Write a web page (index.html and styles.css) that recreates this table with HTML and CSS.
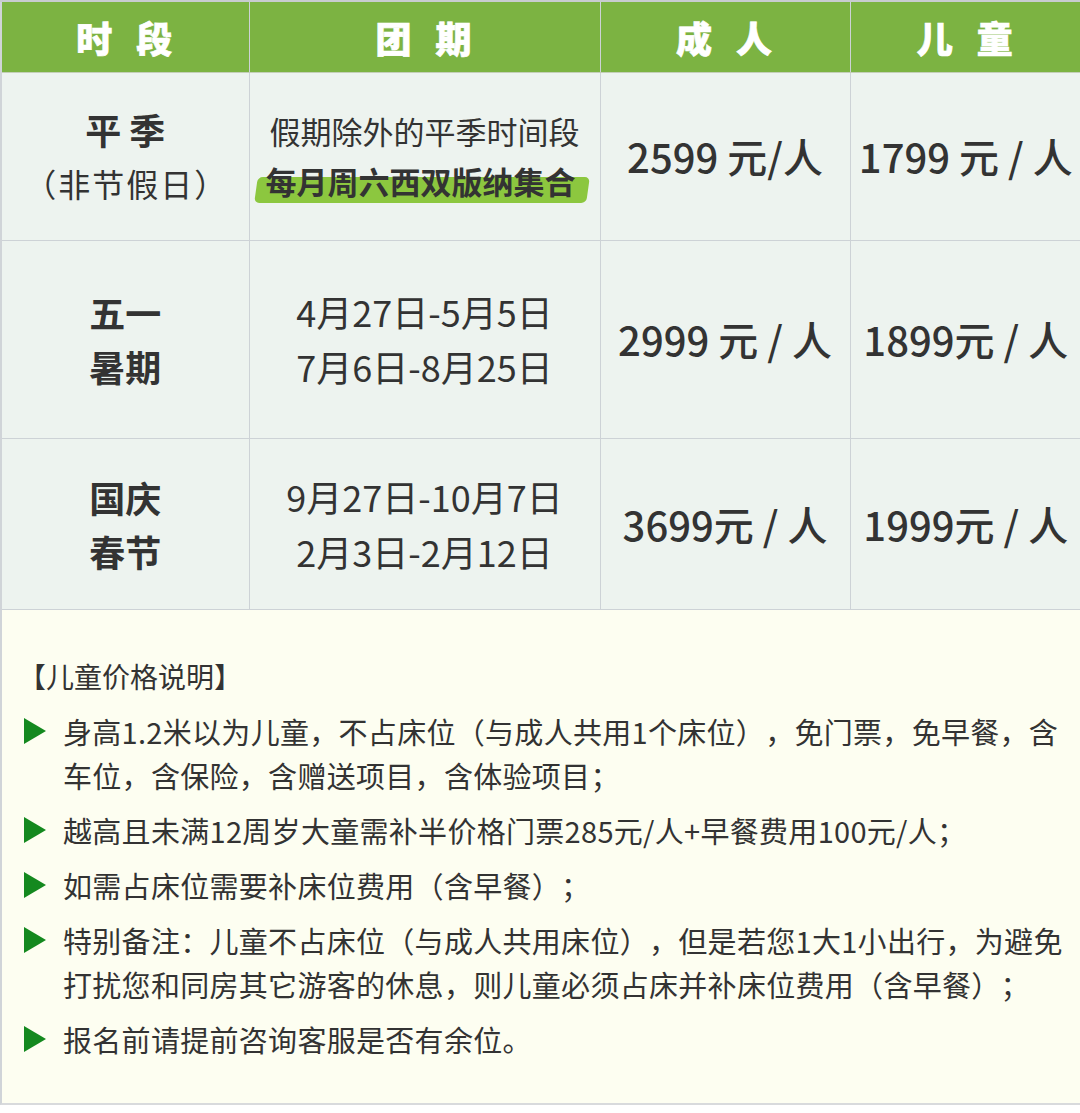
FILE: index.html
```html
<!DOCTYPE html>
<html lang="zh-CN">
<head>
<meta charset="utf-8">
<title>价格表</title>
<link rel="stylesheet" href="styles.css">
</head>
<body>
<div class="page">
  <table class="grid">
    <colgroup>
      <col class="c1"><col class="c2"><col class="c3"><col class="c4">
    </colgroup>
    <thead>
      <tr class="head">
        <th>时 段</th><th>团 期</th><th>成 人</th><th>儿 童</th>
      </tr>
    </thead>
    <tbody>
      <tr class="r1">
        <td class="season"><div class="strong">平 季</div><div class="sub">（非节假日）</div></td>
        <td class="period"><div class="note">假期除外的平季时间段</div><div class="mark"><span class="hl">每月周六西双版纳集合</span></div></td>
        <td class="price">2599 元/人</td>
        <td class="price">1799 元 / 人</td>
      </tr>
      <tr class="r2">
        <td class="season"><div class="strong">五一</div><div class="strong">暑期</div></td>
        <td class="period"><div class="date">4月27日-5月5日</div><div class="date">7月6日-8月25日</div></td>
        <td class="price">2999 元 / 人</td>
        <td class="price">1899元 / 人</td>
      </tr>
      <tr class="r3">
        <td class="season"><div class="strong">国庆</div><div class="strong">春节</div></td>
        <td class="period"><div class="date">9月27日-10月7日</div><div class="date">2月3日-2月12日</div></td>
        <td class="price">3699元 / 人</td>
        <td class="price">1999元 / 人</td>
      </tr>
    </tbody>
  </table>
  <section class="info">
    <h2 class="info-title">【儿童价格说明】</h2>
    <ul class="rules">
      <li><span class="tri"></span><p>身高1.2米以为儿童，不占床位（与成人共用1个床位），免门票，免早餐，含车位，含保险，含赠送项目，含体验项目；</p></li>
      <li><span class="tri"></span><p>越高且未满12周岁大童需补半价格门票285元/人+早餐费用100元/人；</p></li>
      <li><span class="tri"></span><p>如需占床位需要补床位费用（含早餐）；</p></li>
      <li><span class="tri"></span><p>特别备注：儿童不占床位（与成人共用床位），但是若您1大1小出行，为避免打扰您和同房其它游客的休息，则儿童必须占床并补床位费用（含早餐）；</p></li>
      <li><span class="tri"></span><p>报名前请提前咨询客服是否有余位。</p></li>
    </ul>
  </section>
</div>
</body>
</html>
```

FILE: styles.css
```css
* { box-sizing: border-box; }
html, body { margin: 0; padding: 0; background: #ffffff; }
body {
  font-family: "Noto Sans CJK SC", "Noto Sans", sans-serif;
  color: #333333;
  text-spacing-trim: space-all;
}
.page {
  width: 1080px;
}
.grid {
  width: 1080px;
  border-collapse: collapse;
  table-layout: fixed;
}
.c1 { width: 248px; }
.c2 { width: 351px; }
.c3 { width: 250px; }
.c4 { width: 231px; }

.grid th, .grid td {
  border: 1.5px solid #cdd2d6;
  text-align: center;
  vertical-align: middle;
  padding: 0;
}
.grid th {
  background: #7cb342;
  color: #ffffff;
  height: 71px;
  font-size: 36px;
  font-weight: 900;
  -webkit-text-stroke: 0.7px #ffffff;
  letter-spacing: 8px;
  padding-left: 6px;
  border-top: 2px solid #c8ccd0;
  border-bottom-color: #c4cfb8;
}
.grid th:first-child, .grid td:first-child { border-left: 2px solid #d0d4d8; }
.grid th:last-child, .grid td:last-child { border-right: none; }
.grid td { background: #edf3ef; }
.r1 td { height: 168px; }
.r2 td { height: 198px; }
.r3 td { height: 171px; }

.season .strong {
  font-weight: 700;
  font-size: 36px;
  line-height: 54px;
}
.season .sub {
  font-size: 32px;
  line-height: 55px;
  letter-spacing: 2px;
  padding-left: 2px;
}
.period .note {
  font-size: 31px;
  line-height: 50px;
}
.period .mark {
  font-size: 31px;
  line-height: 50px;
  font-weight: 700;
  padding-right: 8px;
}
.hl {
  position: relative;
  display: inline-block;
  z-index: 0;
}
.hl::before {
  content: "";
  position: absolute;
  left: -10px;
  right: -12px;
  top: 21px;
  height: 26px;
  background: #8cc73f;
  border-radius: 5px;
  transform: skewX(-8deg);
  z-index: -1;
}
.period .date {
  font-size: 36px;
  line-height: 55px;
}
.price {
  font-size: 40px;
  font-weight: 500;
}

.info {
  background: #fdfef1;
  border-left: 2px solid #d0d4d8;
  border-bottom: 2px solid #d8dadc;
  padding: 44px 14px 42px 16px;
}
.info-title {
  margin: 0 0 11px 0;
  font-size: 28px;
  font-weight: 400;
  line-height: 44px;
}
.rules {
  list-style: none;
  margin: 0;
  padding: 0;
}
.rules li {
  display: flex;
  align-items: flex-start;
  margin-bottom: 11px;
}
.rules li:last-child { margin-bottom: 0; }
.tri {
  flex: none;
  width: 0;
  height: 0;
  margin: 9px 17px 0 6px;
  border-top: 13px solid transparent;
  border-bottom: 13px solid transparent;
  border-left: 22px solid #14891f;
}
.rules p {
  margin: 0;
  font-size: 29px;
  line-height: 44px;
  letter-spacing: 0.3px;
}
```
